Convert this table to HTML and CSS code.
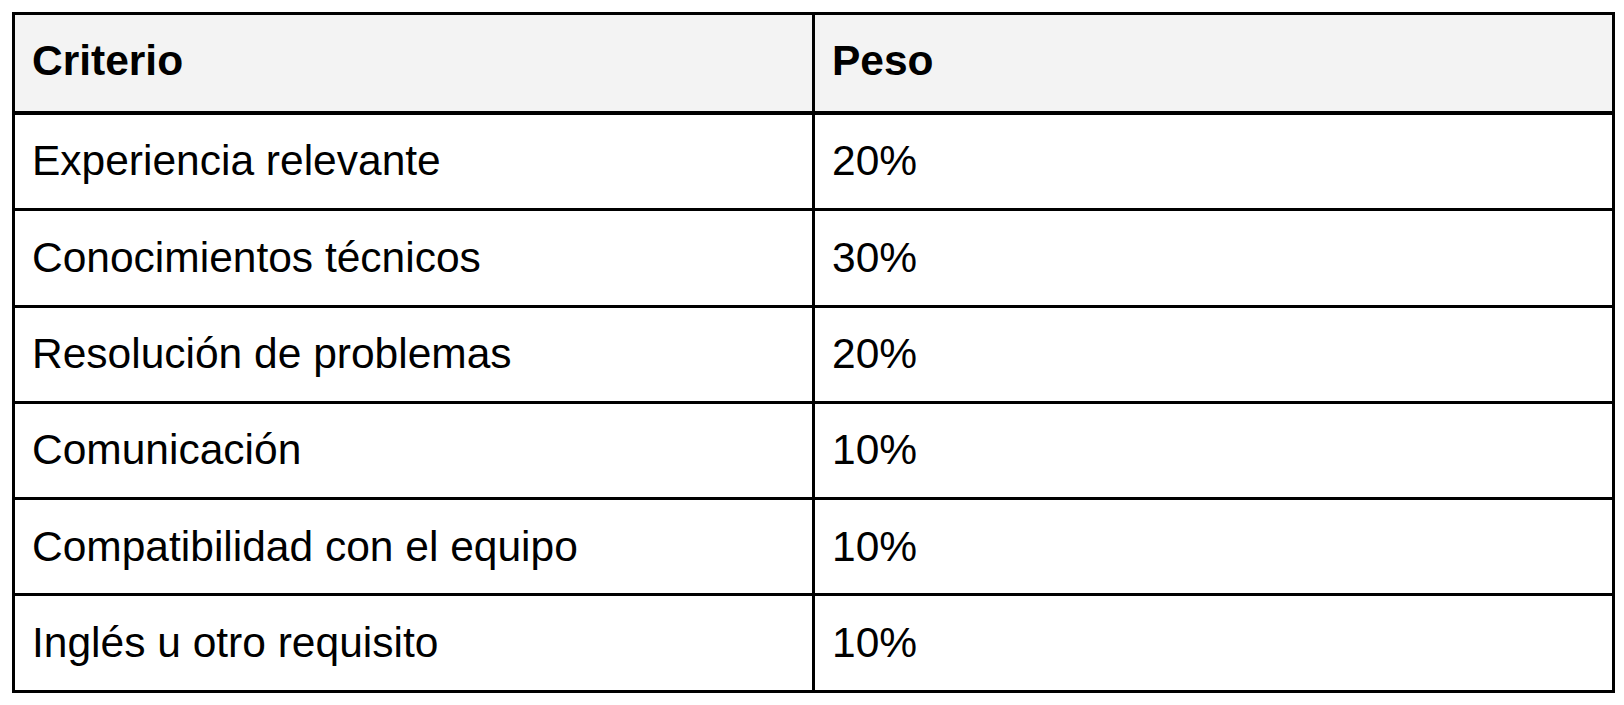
FILE: index.html
```html
<!DOCTYPE html>
<html lang="es">
<head>
<meta charset="utf-8">
<title>Criterios</title>
<link rel="stylesheet" href="styles.css">
</head>
<body>
<table class="grid">
  <thead>
    <tr class="head-row">
      <th class="col-a">Criterio</th>
      <th class="col-b">Peso</th>
    </tr>
  </thead>
  <tbody>
    <tr><td>Experiencia relevante</td><td>20%</td></tr>
    <tr><td>Conocimientos técnicos</td><td>30%</td></tr>
    <tr><td>Resolución de problemas</td><td>20%</td></tr>
    <tr><td>Comunicación</td><td>10%</td></tr>
    <tr><td>Compatibilidad con el equipo</td><td>10%</td></tr>
    <tr><td>Inglés u otro requisito</td><td>10%</td></tr>
  </tbody>
</table>
</body>
</html>
```

FILE: styles.css
```css
html, body {
  margin: 0;
  padding: 0;
  background: #ffffff;
}
body {
  padding: 12px;
  font-family: "Liberation Sans", Arial, sans-serif;
  color: #000000;
}
.grid {
  border-collapse: separate;
  border-spacing: 0;
  border-left: 3px solid #000;
  border-top: 3px solid #000;
  width: 1603px;
  table-layout: fixed;
  font-size: 42.5px;
}
.grid th,
.grid td {
  box-sizing: border-box;
  border-right: 3px solid #000;
  border-bottom: 3px solid #000;
  text-align: left;
  padding: 0 17px;
  line-height: 1;
  vertical-align: middle;
}
.grid th {
  background: #f3f3f3;
  font-weight: bold;
  height: 100px;
  padding-bottom: 4px;
  border-bottom-width: 4px;
}
.col-a, .col-b { width: 50%; }
.grid td {
  height: 96.3px;
}
```
